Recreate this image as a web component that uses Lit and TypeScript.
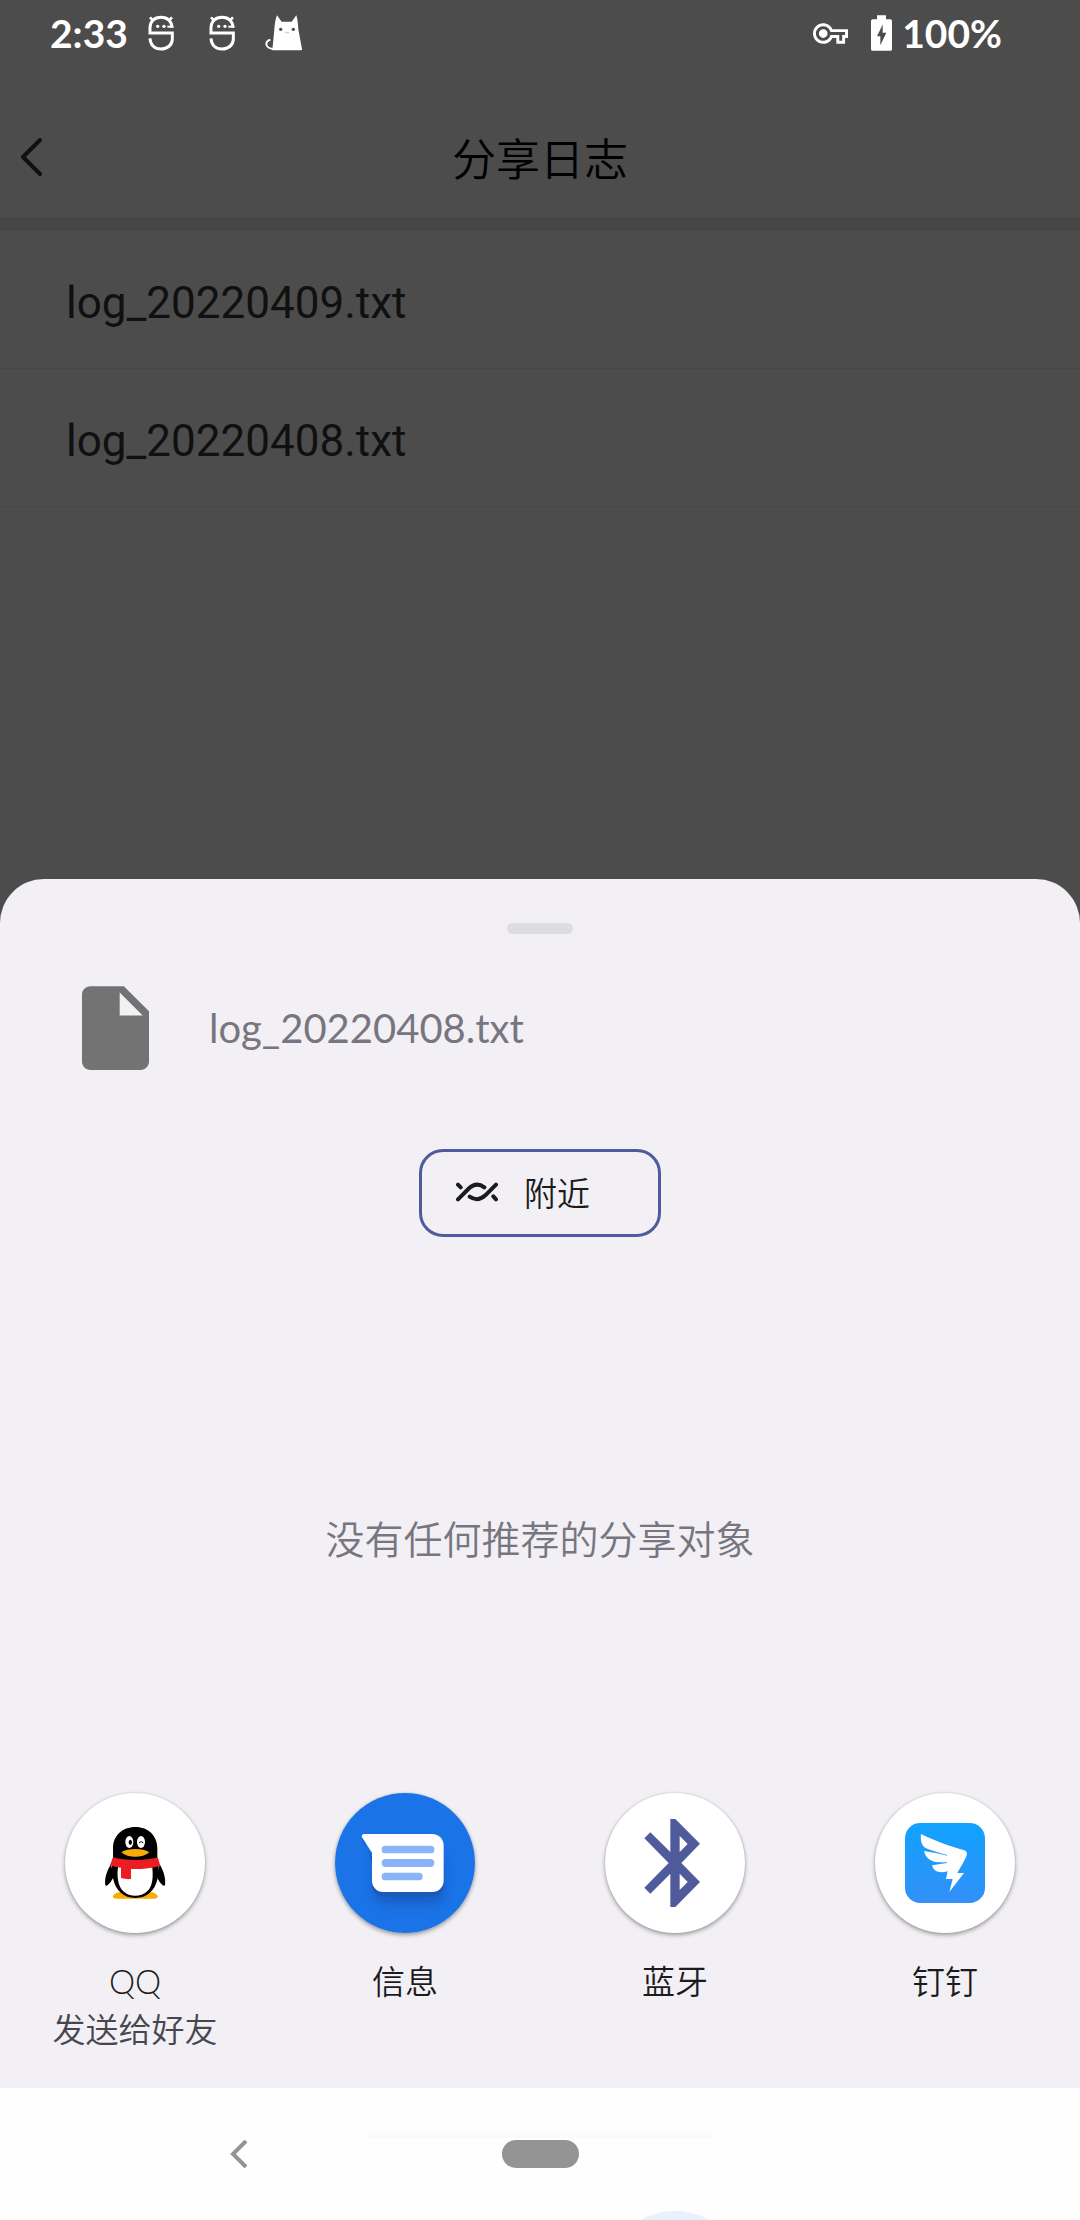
import { LitElement, html, svg, css, nothing } from "lit";
import type { TemplateResult } from "lit";
import { customElement, property } from "lit/decorators.js";

interface ShareTarget {
  label: string;
  detail?: string;
  art: TemplateResult;
}

const LOGS = ["log_20220409.txt", "log_20220408.txt"];

const qqArt = svg`
  <path fill="#faab07" d="M219 379c2-9 14-13 28-13h78c14 0 26 4 28 13 1 5-4 7-12 7H231c-8 0-13-2-12-7z"/>
  <path d="M213 283c-14 21-20 45-17 63 6 5 17-10 25-26zM359 283c13 21 19 45 16 63-6 5-17-10-25-26z"/>
  <path d="M286 171c-40 0-67 27-67 64v27c-4 20-5 40 0 63 8 38 32 59 67 59s59-21 67-59c5-23 3-43-1-63v-27c0-37-26-64-66-64z"/>
  <path fill="#fff" d="M235 288c-3 14-3 28-1 42 5 32 25 47 52 47s47-15 51-47c2-14 1-30-1-44z"/>
  <ellipse cx="268" cy="216" rx="12" ry="18" fill="#fff"/>
  <ellipse cx="303" cy="216" rx="12" ry="18" fill="#fff"/>
  <ellipse cx="271" cy="217" rx="5" ry="8"/>
  <path d="M297 219q6-8 13-1" fill="none" stroke="#000" stroke-width="3"/>
  <path fill="#faab07" d="M244 247c20-13 64-13 84 0-20 18-64 18-84 0z"/>
  <path fill="#eb1c22" d="M219 262c36 11 98 11 134 0l8 25c-24 7-56 11-88 10v30c-10 1-20 0-30-3v-31c-12-1-23-4-33-7z"/>
`;

const messagesArt = svg`
  <defs>
    <filter id="soft" x="-30%" y="-30%" width="160%" height="170%"><feGaussianBlur stdDeviation="16"/></filter>
  </defs>
  <circle cx="285" cy="279" r="210" fill="#1b73e8"/>
  <rect x="190" y="250" width="212" height="150" rx="34" fill="#174ea6" opacity=".6" filter="url(#soft)"/>
  <path fill="#185abc" d="M157 198v13l29 50v83c0 20 15 35 34 35h147c19 0 34-15 34-35v-30H200z"/>
  <path fill="#fff" d="M163 192h204c19 0 34 15 34 34v106c0 19-15 34-34 34H220c-19 0-34-15-34-34v-84l-29-45c-4-6 0-11 6-11z"/>
  <g fill="#8ab4f8">
    <rect x="215" y="227" width="158" height="23" rx="11"/>
    <rect x="215" y="267" width="158" height="24" rx="12"/>
    <rect x="215" y="308" width="123" height="23" rx="11"/>
  </g>
`;

const bluetoothArt = svg`
  <path fill="#4f5b9b" fill-rule="evenodd" d="M271 147h15l74 74-56 58 56 57-74 75h-15V311l-60 60-18-18 73-74-73-74 18-18 60 59zM299 198v48l24-24zM299 311v49l24-24z"/>
`;

const dingArt = svg`
  <defs>
    <linearGradient id="sky" x1="0" y1="0" x2="0" y2="1">
      <stop offset="0" stop-color="#10a2ff"/><stop offset="1" stop-color="#3390f8"/>
    </linearGradient>
  </defs>
  <rect x="165" y="159" width="240" height="240" rx="46" fill="url(#sky)"/>
  <path fill="#fff" d="M213 192c40 20 88 37 130 49 7 2 9 8 7 15-5 15-19 36-28 53h20l-44 57 10-39h-20l5-23c-24 6-42 2-47-18l45-7v-2c-38 2-62-4-69-34 24 3 47 9 69 14v-2c-24-8-48-14-66-22-11-8-14-22-12-41z"/>
`;

const TARGETS: ShareTarget[] = [
  { label: "QQ", detail: "发送给好友", art: qqArt },
  { label: "信息", art: messagesArt },
  { label: "蓝牙", art: bluetoothArt },
  { label: "钉钉", art: dingArt },
];

@customElement("status-bar")
export class StatusBar extends LitElement {
  static styles = css`
    :host {
      display: flex;
      align-items: center;
      justify-content: space-between;
      height: 66px;
      padding: 0 78px 0 50px;
      color: #fff;
      font: 700 39px/48px Lato, sans-serif;
    }
    .group { display: flex; align-items: center; }
    .time { margin-right: 20px; }
    .app { display: block; width: 26px; height: 36px; margin-right: 35px; }
    .cat { display: block; width: 37px; height: 36px; margin-left: -5px; }
    .key { display: block; width: 35px; height: 21px; margin-right: 23px; }
    .battery { display: block; width: 21px; height: 36px; margin-right: 10px; }
  `;

  private mascot() {
    return html`<svg class="app" viewBox="445 46 78 108" fill="none" stroke="#fff" stroke-width="9" aria-hidden="true">
      <path d="M517 84c0-18-13-31-33-31s-33 13-33 31v16h67v18c0 18-15 30-34 30s-32-12-33-32"/>
      <path d="M503 81h18" stroke-width="6"/>
      <path d="M451 53l9 9M517 53l-9 9" stroke-width="8"/>
      <circle cx="474" cy="80" r="5" fill="#fff" stroke="none"/>
      <circle cx="493" cy="80" r="5" fill="#fff" stroke="none"/>
    </svg>`;
  }

  render() {
    return html`
      <div class="group">
        <span class="time">2:33</span>
        ${this.mascot()}${this.mascot()}
        <svg class="cat" viewBox="795 46 111 108" aria-hidden="true">
          <path fill="#fff" d="M831 47l14 19h30l14-19c4 12 5 27 6 42l11 59c0 3-1 4-5 4h-84l6-63c1-15 3-30 8-42z"/>
          <path d="M824 148c-16 0-25-7-25-15 0-6 5-11 12-13" fill="none" stroke="#fff" stroke-width="6"/>
          <circle cx="842" cy="89" r="5" fill="#4c4c4c"/>
          <circle cx="880" cy="89" r="5" fill="#4c4c4c"/>
          <path d="M854 99q3 2 6-2 3 4 7 2" fill="none" stroke="#999" stroke-width="2"/>
        </svg>
      </div>
      <div class="group">
        <svg class="key" viewBox="0 5 24 14" fill="#fff" aria-hidden="true">
          <path d="M22 19h-6v-4h-2.68c-1.14 2.42-3.6 4-6.32 4-3.86 0-7-3.14-7-7s3.14-7 7-7c2.72 0 5.17 1.58 6.32 4H24v6h-2v4zm-4-2h2v-4h2v-2H11.94l-.23-.67C11.01 8.34 9.11 7 7 7c-2.76 0-5 2.24-5 5s2.24 5 5 5c2.11 0 4.01-1.34 4.71-3.33l.23-.67H18v4zM7 15c-1.65 0-3-1.35-3-3s1.35-3 3-3 3 1.35 3 3-1.35 3-3 3z"/>
        </svg>
        <svg class="battery" viewBox="330 45 63 107" fill="#fff" aria-hidden="true">
          <path fill-rule="evenodd" d="M348 45h27v12h13q5 0 5 5v85q0 5-5 5h-53q-5 0-5-5V62q0-5 5-5h13zM365 73l-17 35h10v27l18-37h-11z"/>
        </svg>
        <span>100%</span>
      </div>
    `;
  }
}

@customElement("log-page")
export class LogPage extends LitElement {
  static styles = css`
    :host { display: block; }
    .header {
      display: grid;
      grid-template-columns: 60px 1fr 60px;
      align-items: center;
      box-sizing: border-box;
      height: 165px;
      padding-top: 30px;
      border-bottom: 14px solid #474747;
    }
    .back {
      display: grid;
      justify-items: end;
      width: 46px;
      padding: 20px 4px 20px 0;
      border: 0;
      background: none;
    }
    .back svg { display: block; width: 22px; height: 40px; }
    .title {
      margin: 0;
      text-align: center;
      color: #000;
      font: 350 44px/64px "Noto Sans CJK SC", sans-serif;
    }
    .list { margin: 0; padding: 0; list-style: none; }
    .row { border-bottom: 1px solid #474747; }
    .link {
      display: block;
      padding: 48px 66px 41px;
      color: #101010;
      text-decoration: none;
      font: 400 44px/48px Roboto, sans-serif;
    }
  `;

  render() {
    return html`
      <header class="header">
        <button class="back" aria-label="返回">
          <svg viewBox="0 0 22 40" fill="none" stroke="#111" stroke-width="4" stroke-linecap="round" stroke-linejoin="round" aria-hidden="true">
            <path d="M20 3 3 20l17 17"/>
          </svg>
        </button>
        <h1 class="title">分享日志</h1>
      </header>
      <ul class="list">
        ${LOGS.map((name) => html`<li class="row"><a class="link" href="#${name}">${name}</a></li>`)}
      </ul>
    `;
  }
}

@customElement("share-target")
export class ShareTargetButton extends LitElement {
  @property({ attribute: false }) target!: ShareTarget;

  static styles = css`
    :host { display: block; }
    .target {
      display: flex;
      flex-direction: column;
      align-items: center;
      width: 100%;
      padding: 0;
      border: 0;
      background: none;
      color: #1b1b1f;
      font: 350 33px/48px Lato, "Noto Sans CJK SC", sans-serif;
    }
    .disc {
      width: 140px;
      height: 140px;
      margin-bottom: 24px;
      border-radius: 50%;
      background: #fff;
      box-shadow: 0 2px 4px rgba(0, 0, 0, 0.36), 0 0 2px rgba(0, 0, 0, 0.12);
    }
    .art { display: block; width: 100%; height: 100%; }
    .detail { color: #46464f; }
  `;

  render() {
    const { label, detail, art } = this.target;
    return html`
      <button class="target">
        <span class="disc"><svg class="art" viewBox="75 69 420 420" aria-hidden="true">${art}</svg></span>
        <span>${label}</span>
        ${detail ? html`<span class="detail">${detail}</span>` : nothing}
      </button>
    `;
  }
}

@customElement("share-sheet")
export class ShareSheet extends LitElement {
  static styles = css`
    :host {
      display: block;
      padding: 44px 0 35px;
      border-radius: 44px 44px 0 0;
      background: #f2f0f4;
    }
    .handle { width: 66px; height: 11px; margin: 0 auto; border-radius: 6px; background: #dddddd; }
    .preview {
      display: flex;
      align-items: center;
      gap: 60px;
      padding: 52px 82px 0;
      color: #777680;
      font: 400 40px/48px Lato, sans-serif;
    }
    .file { display: block; width: 67px; height: 84px; }
    .nearby {
      display: flex;
      align-items: center;
      gap: 26px;
      box-sizing: border-box;
      width: 242px;
      height: 88px;
      margin: 79px auto 0;
      padding: 0 34px 2px;
      border: 3px solid #4f5b9b;
      border-radius: 24px;
      background: none;
      color: #1b1b1f;
      font: 350 33px/48px "Noto Sans CJK SC", sans-serif;
    }
    .wave { display: block; width: 42px; height: 20px; }
    .empty {
      margin: 0;
      padding: 270px 0 226px;
      text-align: center;
      color: #777680;
      font: 350 39px/60px "Noto Sans CJK SC", sans-serif;
    }
    .targets { display: grid; grid-template-columns: repeat(4, 1fr); align-items: start; }
  `;

  render() {
    return html`
      <div class="handle"></div>
      <div class="preview">
        <svg class="file" viewBox="4 2 16 20" fill="#737373" aria-hidden="true">
          <path d="M6 2c-1.1 0-2 .9-2 2v16c0 1.1.9 2 2 2h12c1.1 0 2-.9 2-2V8l-6-6H6zm7 7V3.5L18.5 9H13z"/>
        </svg>
        <span>${LOGS[1]}</span>
      </div>
      <button class="nearby">
        <svg class="wave" viewBox="168 159 126 60" fill="none" stroke="#1b1b1f" stroke-width="12" stroke-linecap="round" aria-hidden="true">
          <path d="M174 211l31-31c15-15 32-17 48-5M209 203c17 12 33 9 47-4l32-32"/>
          <path d="M174 167l8 8M280 202l8 9"/>
        </svg>
        <span>附近</span>
      </button>
      <p class="empty">没有任何推荐的分享对象</p>
      <div class="targets">
        ${TARGETS.map((t) => html`<share-target .target=${t}></share-target>`)}
      </div>
    `;
  }
}

@customElement("nav-bar")
export class NavBar extends LitElement {
  static styles = css`
    :host {
      display: block;
      position: relative;
      overflow: hidden;
      height: 132px;
      background: #fefefe;
    }
    .keys {
      display: grid;
      grid-template-columns: 1fr 80px 1fr;
      align-items: center;
      height: 132px;
    }
    .key { display: grid; place-items: center; padding: 0; border: 0; background: none; }
    .back { justify-self: center; width: 80px; height: 80px; margin-right: 22px; }
    .back svg { display: block; width: 18px; height: 28px; }
    .pill { width: 77px; height: 28px; border-radius: 14px; background: #949494; }
    /* Next row of targets, showing faintly through the bar. */
    .ghost { position: absolute; top: 123px; left: 62.5%; width: 140px; height: 140px; margin-left: -70px; border-radius: 50%; background: #e9f1fc; }
    .strip { position: absolute; top: 44px; left: 34%; width: 32%; height: 6px; background: #fbfbfe; }
  `;

  render() {
    return html`
      <div class="strip"></div>
      <div class="ghost"></div>
      <div class="keys">
        <button class="key back" aria-label="返回">
          <svg viewBox="0 0 18 28" fill="none" stroke="#949494" stroke-width="4" aria-hidden="true">
            <path d="M16 1 3 14l13 13"/>
          </svg>
        </button>
        <button class="key" aria-label="主屏幕"><span class="pill"></span></button>
      </div>
    `;
  }
}

@customElement("app-root")
export class AppRoot extends LitElement {
  static styles = css`
    :host {
      display: flex;
      flex-direction: column;
      min-height: 100vh;
      background: #4c4c4c;
    }
    .sheet { margin-top: auto; }
  `;

  render() {
    return html`
      <status-bar></status-bar>
      <log-page></log-page>
      <share-sheet class="sheet"></share-sheet>
      <nav-bar></nav-bar>
    `;
  }
}
